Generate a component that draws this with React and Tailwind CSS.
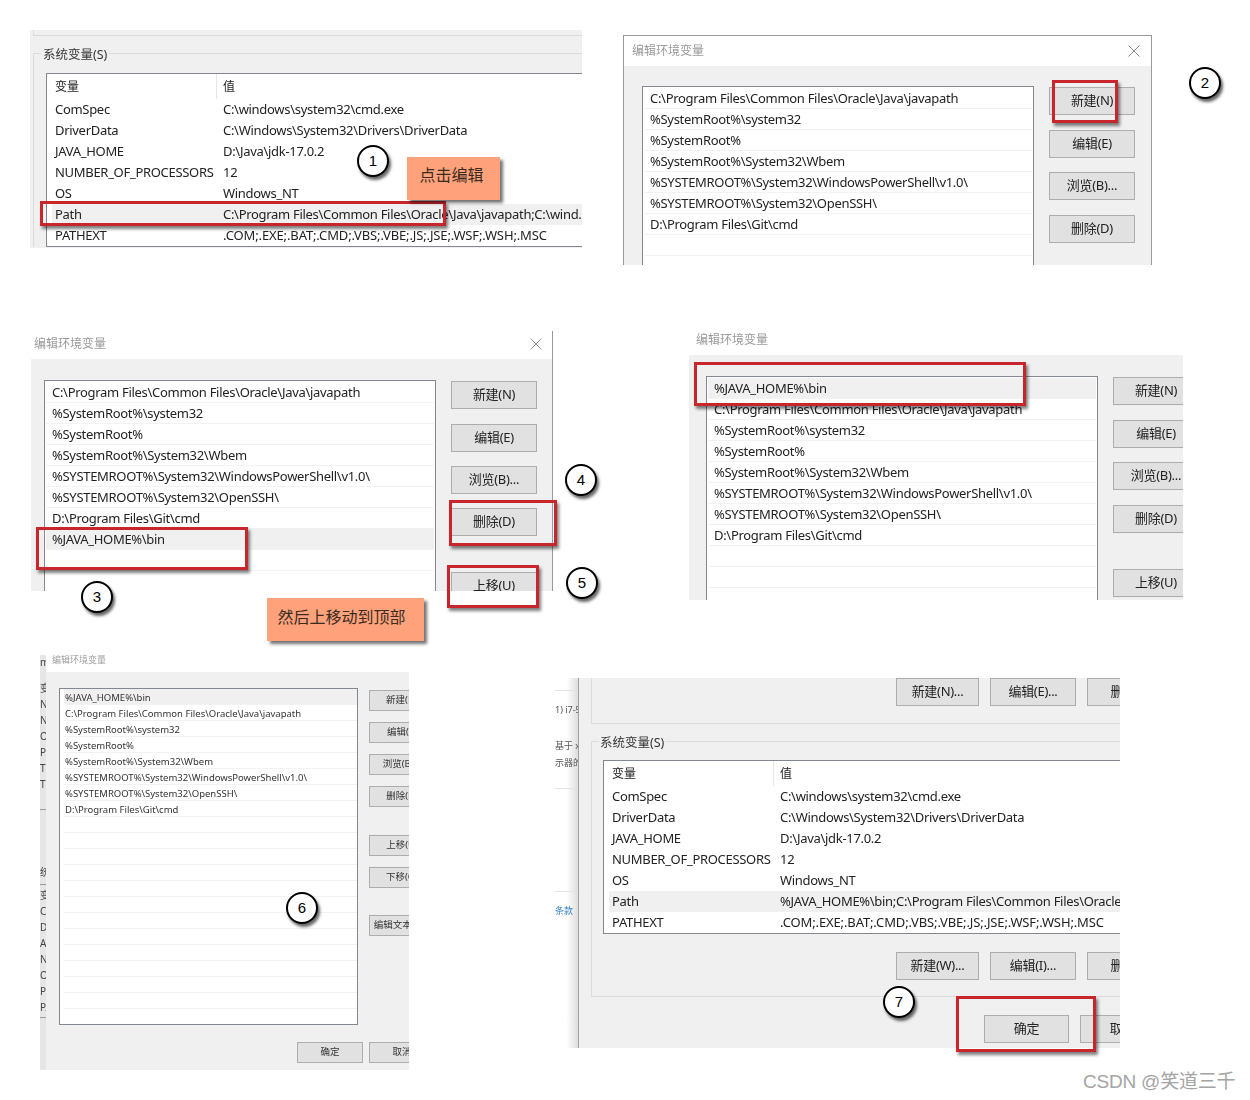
import React from 'react';

const baseRows = [
    'C:\\Program Files\\Common Files\\Oracle\\Java\\javapath',
    '%SystemRoot%\\system32',
    '%SystemRoot%',
    '%SystemRoot%\\System32\\Wbem',
    '%SYSTEMROOT%\\System32\\WindowsPowerShell\\v1.0\\',
    '%SYSTEMROOT%\\System32\\OpenSSH\\',
    'D:\\Program Files\\Git\\cmd',
];
const javaRow = '%JAVA_HOME%\\bin';

const vars = [
    ['ComSpec', 'C:\\windows\\system32\\cmd.exe'],
    ['DriverData', 'C:\\Windows\\System32\\Drivers\\DriverData'],
    ['JAVA_HOME', 'D:\\Java\\jdk-17.0.2'],
    ['NUMBER_OF_PROCESSORS', '12'],
    ['OS', 'Windows_NT'],
    ['Path', ''],
    ['PATHEXT', '.COM;.EXE;.BAT;.CMD;.VBS;.VBE;.JS;.JSE;.WSF;.WSH;.MSC'],
];

function Btn({ children, className = '' }) {
    return (
        <div className={`shrink-0 h-[28px] flex items-center justify-center whitespace-nowrap bg-[#e1e1e1] border border-[#adadad] text-[13px] tracking-[-0.3px] text-[#222] ${className}`}>
            {children}
        </div>
    );
}

function SmallBtn({ children, className = '' }) {
    return (
        <div className={`shrink-0 w-[66px] h-[21px] flex items-center justify-center whitespace-nowrap bg-[#e1e1e1] border border-[#adadad] text-[9.5px] text-[#333] ${className}`}>
            {children}
        </div>
    );
}

function PathList({ rows, selected, blanks = 2 }) {
    const all = [...rows, ...Array(blanks).fill('')];
    return (
        <div className="w-[392px] shrink-0 bg-white border-t border-x border-[#828790] overflow-hidden pt-px">
            {all.map((row, i) => (
                <div key={i} className={`h-[21px] ml-[1px] mr-[1px] pl-[6px] leading-[20px] text-[13px] tracking-[-0.3px] text-[#222] whitespace-nowrap border-b border-[#f2f2f2] ${i === selected ? 'bg-[#f0f0f0]' : ''}`}>
                    {row}
                </div>
            ))}
        </div>
    );
}

function CloseX({ className = '' }) {
    return (
        <svg width="12" height="12" viewBox="0 0 12 12" className={className}>
            <path d="M0.5 0.5L11.5 11.5M11.5 0.5L0.5 11.5" stroke="#8f8f8f" strokeWidth="1" fill="none" />
        </svg>
    );
}

function VarTable({ pathValue, className = '' }) {
    return (
        <div className={`w-[700px] bg-white border border-[#828790] text-[13px] tracking-[-0.3px] text-[#222] ${className}`}>
            <div className="h-[25px] flex text-[12px] tracking-normal">
                <div className="w-[170px] pl-[8px] leading-[25px] border-r border-[#e5e5e5]">变量</div>
                <div className="pl-[6px] leading-[25px]">值</div>
            </div>
            {vars.map(([name, value]) => (
                <div key={name} className={`h-[21px] flex leading-[21px] whitespace-nowrap ml-[5px] ${name === 'Path' ? 'bg-[#f0f0f0]' : ''}`}>
                    <div className="w-[171px] pl-[3px] shrink-0">{name}</div>
                    <div className={name === 'PATHEXT' ? 'tracking-[-0.13px]' : ''}>{name === 'Path' ? pathValue : value}</div>
                </div>
            ))}
        </div>
    );
}

function RedBox({ className }) {
    return <div className={`absolute border-[3px] border-[#c9252d] shadow-[2px_3px_3px_rgba(0,0,0,0.5)] ${className}`}></div>;
}

function Circle({ n, className }) {
    return (
        <div className={`absolute w-[32px] h-[32px] rounded-full bg-white border-2 border-black shadow-[2px_3px_3px_rgba(0,0,0,0.6)] flex items-center justify-center text-[15px] text-black [font-family:'Liberation_Sans',sans-serif] ${className}`}>
            {n}
        </div>
    );
}

function Callout({ children, className }) {
    return (
        <div className={`absolute bg-[#ffa27c] shadow-[3px_3px_3px_rgba(0,0,0,0.55)] flex items-center justify-center text-[16px] text-[#3a2a20] ${className}`}>
            {children}
        </div>
    );
}

const stripOne = ['变', 'N', 'N', 'O', 'Pa', 'TE', 'TM'];
const stripTwo = ['变', 'C', 'Dr', 'A', 'N', 'O', 'Pa', 'PA'];

export default function App() {
    return (
        <div className="relative w-[1250px] h-[1100px] bg-white overflow-hidden [font-family:'Noto_Sans','Noto_Sans_CJK_SC',sans-serif]">

            {/* step 1: system variables */}
            <div className="absolute left-[30px] top-[30px] w-[552px] h-[218px] bg-[#f0f0f0] overflow-hidden blur-[0.3px]">
                <div className="ml-[3px] h-[6px] border-l border-b border-[#dcdcdc]"></div>
                <fieldset className="mt-[8px] ml-[3px] w-[600px] border-l border-t border-[#dcdcdc]">
                    <legend className="ml-[7px] px-[2px] pt-[3px] text-[12.5px] leading-[16px] text-[#333]">系统变量(S)</legend>
                    <VarTable className="mt-[10px] ml-[12px]" pathValue="C:\Program Files\Common Files\Oracle\Java\javapath;C:\wind..." />
                </fieldset>
            </div>

            {/* step 2: edit dialog */}
            <div className="absolute left-[623px] top-[35px] w-[529px] h-[230px] flex flex-col border-t border-x border-[#9a9a9a] overflow-hidden blur-[0.3px]">
                <div className="h-[30px] shrink-0 bg-white flex items-center justify-between pl-[8px] pr-[11px] pb-px text-[12px] text-[#999]">
                    <span>编辑环境变量</span>
                    <CloseX />
                </div>
                <div className="flex-1 min-h-0 bg-[#f0f0f0] flex pt-[20px] pl-[18px]">
                    <PathList rows={baseRows} />
                    <div className="ml-[15px] w-[86px] shrink-0 pt-px flex flex-col">
                        <Btn>新建(N)</Btn>
                        <Btn className="mt-[15px]">编辑(E)</Btn>
                        <Btn className="mt-[14px]">浏览(B)...</Btn>
                        <Btn className="mt-[15px]">删除(D)</Btn>
                    </div>
                </div>
            </div>

            {/* step 3-5: java row added */}
            <div className="absolute left-[31px] top-[331px] w-[522px] h-[260px] flex flex-col border-r border-[#9a9a9a] overflow-hidden blur-[0.3px]">
                <div className="h-[28px] shrink-0 bg-white flex items-center justify-between pl-[3px] pr-[10px] pb-[2px] text-[12px] text-[#999]">
                    <span>编辑环境变量</span>
                    <CloseX />
                </div>
                <div className="flex-1 min-h-0 bg-[#f0f0f0] flex pt-[21px] pl-[13px]">
                    <PathList rows={[...baseRows, javaRow]} selected={7} />
                    <div className="ml-[15px] w-[86px] shrink-0 pt-px flex flex-col">
                        <Btn>新建(N)</Btn>
                        <Btn className="mt-[15px]">编辑(E)</Btn>
                        <Btn className="mt-[14px]">浏览(B)...</Btn>
                        <Btn className="mt-[14px]">删除(D)</Btn>
                        <Btn className="mt-[36px]">上移(U)</Btn>
                    </div>
                </div>
            </div>

            {/* java row moved to top */}
            <div className="absolute left-[689px] top-[331px] w-[494px] h-[269px] flex flex-col overflow-hidden blur-[0.3px]">
                <div className="h-[24px] shrink-0 bg-white pl-[7px] text-[12px] leading-[18px] text-[#999]">编辑环境变量</div>
                <div className="flex-1 min-h-0 bg-[#f0f0f0] flex pt-[21px] pl-[17px]">
                    <PathList rows={[javaRow, ...baseRows]} selected={0} />
                    <div className="ml-[15px] w-[86px] shrink-0 pt-px flex flex-col">
                        <Btn>新建(N)</Btn>
                        <Btn className="mt-[15px]">编辑(E)</Btn>
                        <Btn className="mt-[14px]">浏览(B)...</Btn>
                        <Btn className="mt-[15px]">删除(D)</Btn>
                        <Btn className="mt-[36px]">上移(U)</Btn>
                    </div>
                </div>
            </div>

            {/* step 6: small dialog */}
            <div className="absolute left-[40px] top-[655px] w-[369px] h-[415px] flex overflow-hidden blur-[0.4px]">
                <div className="w-[6px] shrink-0 bg-[#e6e6e6] overflow-hidden text-[10px] text-[#444] whitespace-nowrap flex flex-col">
                    <div className="h-[25px] leading-[14px]">m</div>
                    {stripOne.map((t, i) => (
                        <div key={i} className="h-[16px] shrink-0 leading-[16px]">{t}</div>
                    ))}
                    <div className="mt-[17px] h-px bg-[#999] shrink-0"></div>
                    <div className="mt-[54px] h-[16px] shrink-0 leading-[16px]">统</div>
                    <div className="h-px mt-[4px] bg-[#999] shrink-0"></div>
                    <div className="h-[2px] shrink-0"></div>
                    {stripTwo.map((t, i) => (
                        <div key={i} className="h-[16px] shrink-0 leading-[16px]">{t}</div>
                    ))}
                    <div className="mt-[2px] h-px bg-[#999] shrink-0"></div>
                </div>
                <div className="flex-1 flex flex-col min-w-0">
                    <div className="h-[17px] shrink-0 bg-white pl-[6px] text-[9px] leading-[10px] text-[#a0a0a0]">编辑环境变量</div>
                    <div className="flex-1 bg-[#f0f0f0] relative overflow-hidden">
                        <div className="flex pt-[16px] pl-[13px]">
                            <div className="w-[299px] h-[337px] shrink-0 bg-white border border-[#828790] overflow-hidden">
                                {[javaRow, ...baseRows, ...Array(13).fill('')].map((row, i) => (
                                    <div key={i} className={`h-[16px] ml-[4px] pl-[1px] leading-[17px] text-[9.5px] text-[#333] whitespace-nowrap border-b border-[#f2f2f2] ${i === 0 ? 'bg-[#f0f0f0]' : ''}`}>
                                        {row}
                                    </div>
                                ))}
                            </div>
                            <div className="ml-[11px] pt-[2px] flex flex-col">
                                <SmallBtn>新建(N)</SmallBtn>
                                <SmallBtn className="mt-[11px]">编辑(E)</SmallBtn>
                                <SmallBtn className="mt-[11px]">浏览(B)...</SmallBtn>
                                <SmallBtn className="mt-[11px]">删除(D)</SmallBtn>
                                <SmallBtn className="mt-[28px]">上移(U)</SmallBtn>
                                <SmallBtn className="mt-[11px]">下移(O)</SmallBtn>
                                <SmallBtn className="mt-[27px]">编辑文本(T)...</SmallBtn>
                            </div>
                        </div>
                        <div className="flex mt-[17px] pl-[251px] gap-[6px]">
                            <SmallBtn>确定</SmallBtn>
                            <SmallBtn>取消</SmallBtn>
                        </div>
                    </div>
                </div>
            </div>

            {/* step 7: back in environment variables */}
            <div className="absolute left-[555px] top-[678px] w-[565px] h-[370px] flex overflow-hidden blur-[0.3px]">
                <div className="w-[24px] shrink-0 bg-gradient-to-r from-white from-50% to-[#dedede] border-r border-[#a0a0a0] overflow-hidden text-[9px] text-[#555] whitespace-nowrap">
                    <div className="mt-[12px] h-px bg-[#e4e4e4]"></div>
                    <div className="mt-[12px] leading-[14px]">1) i7-5</div>
                    <div className="mt-[22px] leading-[14px]">基于 x</div>
                    <div className="mt-[3px] leading-[14px]">示器的</div>
                    <div className="mt-[18px] h-px bg-[#e4e4e4]"></div>
                    <div className="mt-[102px] h-px bg-[#e4e4e4]"></div>
                    <div className="mt-[12px] leading-[14px] text-[#2f7fc1]">条款</div>
                </div>
                <div className="flex-1 bg-[#f0f0f0] min-w-0">
                    <div className="ml-[12px] h-[46px] w-[600px] pl-[304px] border-l border-b border-[#dcdcdc] flex gap-[11px]">
                        <Btn className="w-[83px]">新建(N)...</Btn>
                        <Btn className="w-[86px]">编辑(E)...</Btn>
                        <Btn className="w-[86px]">删除(L)</Btn>
                    </div>
                    <fieldset className="mt-[8px] ml-[12px] w-[600px] pb-[16px] border-l border-t border-b border-[#dcdcdc]">
                        <legend className="ml-[7px] px-[1px] pt-[3px] text-[12.5px] leading-[16px] text-[#333]">系统变量(S)</legend>
                        <VarTable className="mt-[9px] ml-[11px]" pathValue="%JAVA_HOME%\bin;C:\Program Files\Common Files\Oracle\Java\javapath" />
                        <div className="mt-[18px] pl-[304px] flex gap-[11px]">
                            <Btn className="w-[83px]">新建(W)...</Btn>
                            <Btn className="w-[86px]">编辑(I)...</Btn>
                            <Btn className="w-[86px]">删除(L)</Btn>
                        </div>
                    </fieldset>
                    <div className="mt-[18px] pl-[405px] w-[700px] flex gap-[11px]">
                        <Btn className="w-[85px]">确定</Btn>
                        <Btn className="w-[85px]">取消</Btn>
                    </div>
                </div>
            </div>

            {/* annotations */}
            <RedBox className="left-[40px] top-[201px] w-[406px] h-[25px]" />
            <RedBox className="left-[1052px] top-[80px] w-[66px] h-[43px]" />
            <RedBox className="left-[36px] top-[527px] w-[212px] h-[43px]" />
            <RedBox className="left-[449px] top-[500px] w-[108px] h-[46px]" />
            <RedBox className="left-[447px] top-[565px] w-[92px] h-[43px]" />
            <RedBox className="left-[694px] top-[362px] w-[332px] h-[44px]" />
            <RedBox className="left-[956px] top-[996px] w-[140px] h-[56px]" />

            <Circle n="1" className="left-[357px] top-[145px]" />
            <Circle n="2" className="left-[1189px] top-[67px]" />
            <Circle n="3" className="left-[81px] top-[581px]" />
            <Circle n="4" className="left-[565px] top-[464px]" />
            <Circle n="5" className="left-[566px] top-[567px]" />
            <Circle n="6" className="left-[286px] top-[892px]" />
            <Circle n="7" className="left-[883px] top-[986px]" />

            <Callout className="left-[407px] top-[157px] w-[93px] h-[43px] pb-[8px] pr-[4px]">点击编辑</Callout>
            <Callout className="left-[267px] top-[598px] w-[157px] h-[43px] pb-[5px] pr-[8px]">然后上移动到顶部</Callout>

            <div className="absolute left-[1083px] top-[1069px] text-[19px] tracking-[-0.2px] leading-[26px] text-[#a4a4a4] whitespace-nowrap [font-family:'Liberation_Sans','Noto_Sans_CJK_SC',sans-serif]">
                CSDN @笑道三千
            </div>
        </div>
    );
}
